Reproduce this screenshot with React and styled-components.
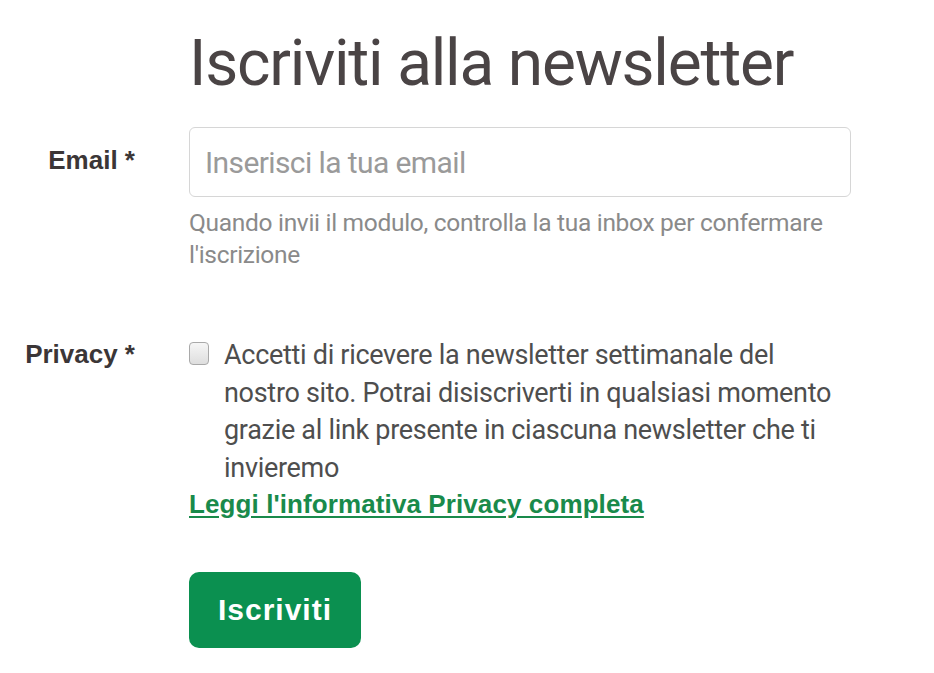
import React from "react"
import styled, { createGlobalStyle } from "styled-components"

const GlobalStyles = createGlobalStyle`
  html, body {
    margin: 0;
    padding: 0;
    background: #fff;
  }
  body {
    font-family: Roboto, "Liberation Sans", Arial, sans-serif;
    color: #555;
  }
`

const Page = styled.div`
  width: 934px;
  height: 673px;
  padding-top: 27px;
  box-sizing: border-box;
`

const Title = styled.h1`
  margin: 0 0 26px 189px;
  font-family: Roboto, "Liberation Sans", sans-serif;
  font-weight: 400;
  font-size: 64px;
  line-height: 74px;
  color: #4a4445;
  letter-spacing: -1.2px;
`

const Row = styled.div`
  display: grid;
  grid-template-columns: 135px 662px;
  column-gap: 54px;
  margin-bottom: ${(p) => p.gap || 0}px;
`

const Label = styled.label`
  text-align: right;
  font-family: "Liberation Sans", Arial, sans-serif;
  font-weight: 700;
  font-size: 26px;
  color: #3b3637;
  padding-top: ${(p) => p.top || 0}px;
`

const Field = styled.div`
  display: flex;
  flex-direction: column;
`

const Input = styled.input`
  box-sizing: border-box;
  width: 662px;
  height: 70px;
  padding: 0 15px;
  border: 1.5px solid #d6d6d6;
  border-radius: 6px;
  font-family: Roboto, "Liberation Sans", sans-serif;
  font-size: 30px;
  color: #555;
  outline: none;
  &::placeholder {
    color: #9a9a9a;
    letter-spacing: -0.6px;
  }
`

const Help = styled.p`
  margin: 10px 0 0;
  font-size: 24.5px;
  line-height: 32px;
  color: #8a8a8a;
  letter-spacing: -0.3px;
`

const CheckRow = styled.div`
  display: flex;
  gap: 15px;
  align-items: flex-start;
`

const Box = styled.span`
  flex: none;
  width: 18px;
  height: 21px;
  margin-top: 5px;
  border: 1.5px solid #a9a9a9;
  border-radius: 4px;
  background: linear-gradient(#f6f6f6, #dedede);
`

const CheckText = styled.p`
  margin: 0;
  font-size: 27px;
  line-height: 37.5px;
  color: #4e4e4e;
  letter-spacing: -0.3px;
  max-width: 620px;
`

const PrivacyLink = styled.a`
  font-family: "Liberation Sans", Arial, sans-serif;
  font-weight: 700;
  font-size: 26px;
  line-height: 34px;
  color: #198a4b;
  letter-spacing: 0.1px;
  text-decoration: underline;
  text-underline-offset: 3px;
  align-self: flex-start;
`

const Button = styled.button`
  margin-top: 51px;
  align-self: flex-start;
  width: 172px;
  height: 76px;
  border: none;
  border-radius: 10px;
  background: #0b9050;
  color: #fff;
  font-family: "Liberation Sans", Arial, sans-serif;
  font-weight: 700;
  font-size: 30px;
  letter-spacing: 1px;
`

export default function App() {
  return (
    <Page>
      <GlobalStyles />
      <Title>Iscriviti alla newsletter</Title>
      <Row gap={66}>
        <Label top={18}>Email *</Label>
        <Field>
          <Input type="email" placeholder="Inserisci la tua email" />
          <Help>
            Quando invii il modulo, controlla la tua inbox per confermare
            <br />
            l'iscrizione
          </Help>
        </Field>
      </Row>
      <Row>
        <Label top={2}>Privacy *</Label>
        <Field>
          <CheckRow>
            <Box />
            <CheckText>
              Accetti di ricevere la newsletter settimanale del nostro sito.
              Potrai disiscriverti in qualsiasi momento grazie al link presente
              in ciascuna newsletter che ti invieremo
            </CheckText>
          </CheckRow>
          <PrivacyLink href="#">Leggi l'informativa Privacy completa</PrivacyLink>
          <Button type="button">Iscriviti</Button>
        </Field>
      </Row>
    </Page>
  )
}
